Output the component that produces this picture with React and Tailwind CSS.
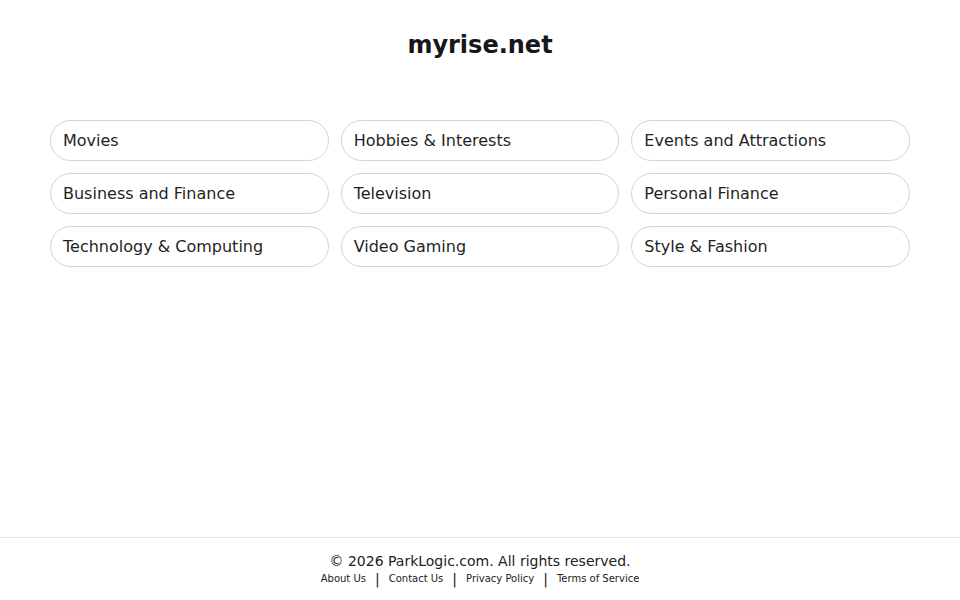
import React from "react";

const topics = [
  "Movies",
  "Hobbies & Interests",
  "Events and Attractions",
  "Business and Finance",
  "Television",
  "Personal Finance",
  "Technology & Computing",
  "Video Gaming",
  "Style & Fashion",
];

const links = ["About Us", "Contact Us", "Privacy Policy", "Terms of Service"];

const App = () => {
  return (
    <div
      className="min-h-screen flex flex-col bg-white text-[#1f1f24]"
      style={{ fontFamily: '"DejaVu Sans", sans-serif' }}
    >
      <main className="flex-1 px-[50px]">
        <h1 className="text-center text-[24px] font-bold leading-[30px] pt-[30px] text-[#16161d]">
          myrise.net
        </h1>

        <div className="grid grid-cols-3 gap-x-[12px] gap-y-[12px] mt-[60px]">
          {topics.map((t) => (
            <a
              key={t}
              href="#"
              className="h-[41px] flex items-center px-[12px] rounded-full border border-[#d4d4d8] text-[16px] text-[#1f1f24]"
            >
              {t}
            </a>
          ))}
        </div>
      </main>

      <footer className="border-t border-[#e5e5e5] h-[63px] pt-[14px] text-center">
        <p className="text-[14px] leading-[18px] text-[#222]">
          © 2026 ParkLogic.com. All rights reserved.
        </p>
        <div className="flex justify-center items-center text-[10px] leading-[16px] mt-[1px] text-[#222]">
          {links.map((l, i) => (
            <React.Fragment key={l}>
              {i > 0 && <span className="mx-[9px] text-[14px] leading-[16px]">|</span>}
              <a href="#">{l}</a>
            </React.Fragment>
          ))}
        </div>
      </footer>
    </div>
  );
};

export default App;
